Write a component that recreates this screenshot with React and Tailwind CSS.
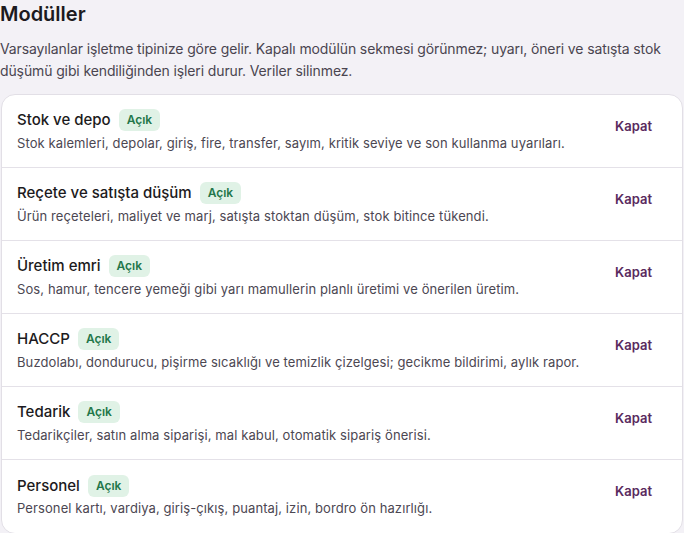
const modules = [
  {
    name: "Stok ve depo",
    desc: "Stok kalemleri, depolar, giriş, fire, transfer, sayım, kritik seviye ve son kullanma uyarıları.",
  },
  {
    name: "Reçete ve satışta düşüm",
    desc: "Ürün reçeteleri, maliyet ve marj, satışta stoktan düşüm, stok bitince tükendi.",
  },
  {
    name: "Üretim emri",
    desc: "Sos, hamur, tencere yemeği gibi yarı mamullerin planlı üretimi ve önerilen üretim.",
  },
  {
    name: "HACCP",
    desc: "Buzdolabı, dondurucu, pişirme sıcaklığı ve temizlik çizelgesi; gecikme bildirimi, aylık rapor.",
  },
  {
    name: "Tedarik",
    desc: "Tedarikçiler, satın alma siparişi, mal kabul, otomatik sipariş önerisi.",
  },
  {
    name: "Personel",
    desc: "Personel kartı, vardiya, giriş-çıkış, puantaj, izin, bordro ön hazırlığı.",
  },
];

function ModuleRow({ name, desc, last }) {
  return (
    <div
      className={
        "h-[73px] flex items-center pl-[15px] pr-[30px] " +
        (last ? "" : "border-b border-[#e4e1e8]")
      }
    >
      <div className="flex-1 min-w-0">
        <div className="flex items-center gap-[8px]">
          <span className="text-[15px] font-medium text-[#1c1a20]">{name}</span>
          <span className="h-[22px] px-2 rounded-md bg-[#e0f2e6] text-[#23774a] text-[12px] font-semibold flex items-center">
            Açık
          </span>
        </div>
        <div className="mt-[2px] text-[13px] text-[#4c4752] tracking-[0.1px]">{desc}</div>
      </div>
      <button className="mb-[9px] ml-1 text-[13px] font-semibold text-[#5a2a5e]">Kapat</button>
    </div>
  );
}

export default function App() {
  return (
    <div
      className="min-h-screen bg-[#f3f1f6] text-[#1c1a20]"
      style={{ fontFamily: "Inter, 'Noto Sans', sans-serif" }}
    >
      <h1 className="text-[20px] font-semibold leading-[28px] text-[#1c1a20]">Modüller</h1>
      <p className="mt-[10px] text-[14px] leading-[22px] text-[#4a4550] tracking-[-0.12px]">
        Varsayılanlar işletme tipinize göre gelir. Kapalı modülün sekmesi görünmez; uyarı, öneri ve satışta stok düşümü gibi kendiliğinden işleri durur. Veriler silinmez.
      </p>
      <div className="mt-[12px] mx-px bg-white border border-[#e2dfe6] rounded-[14px] overflow-hidden">
        {modules.map((m, i) => (
          <ModuleRow key={m.name} {...m} last={i === modules.length - 1} />
        ))}
      </div>
    </div>
  );
}
